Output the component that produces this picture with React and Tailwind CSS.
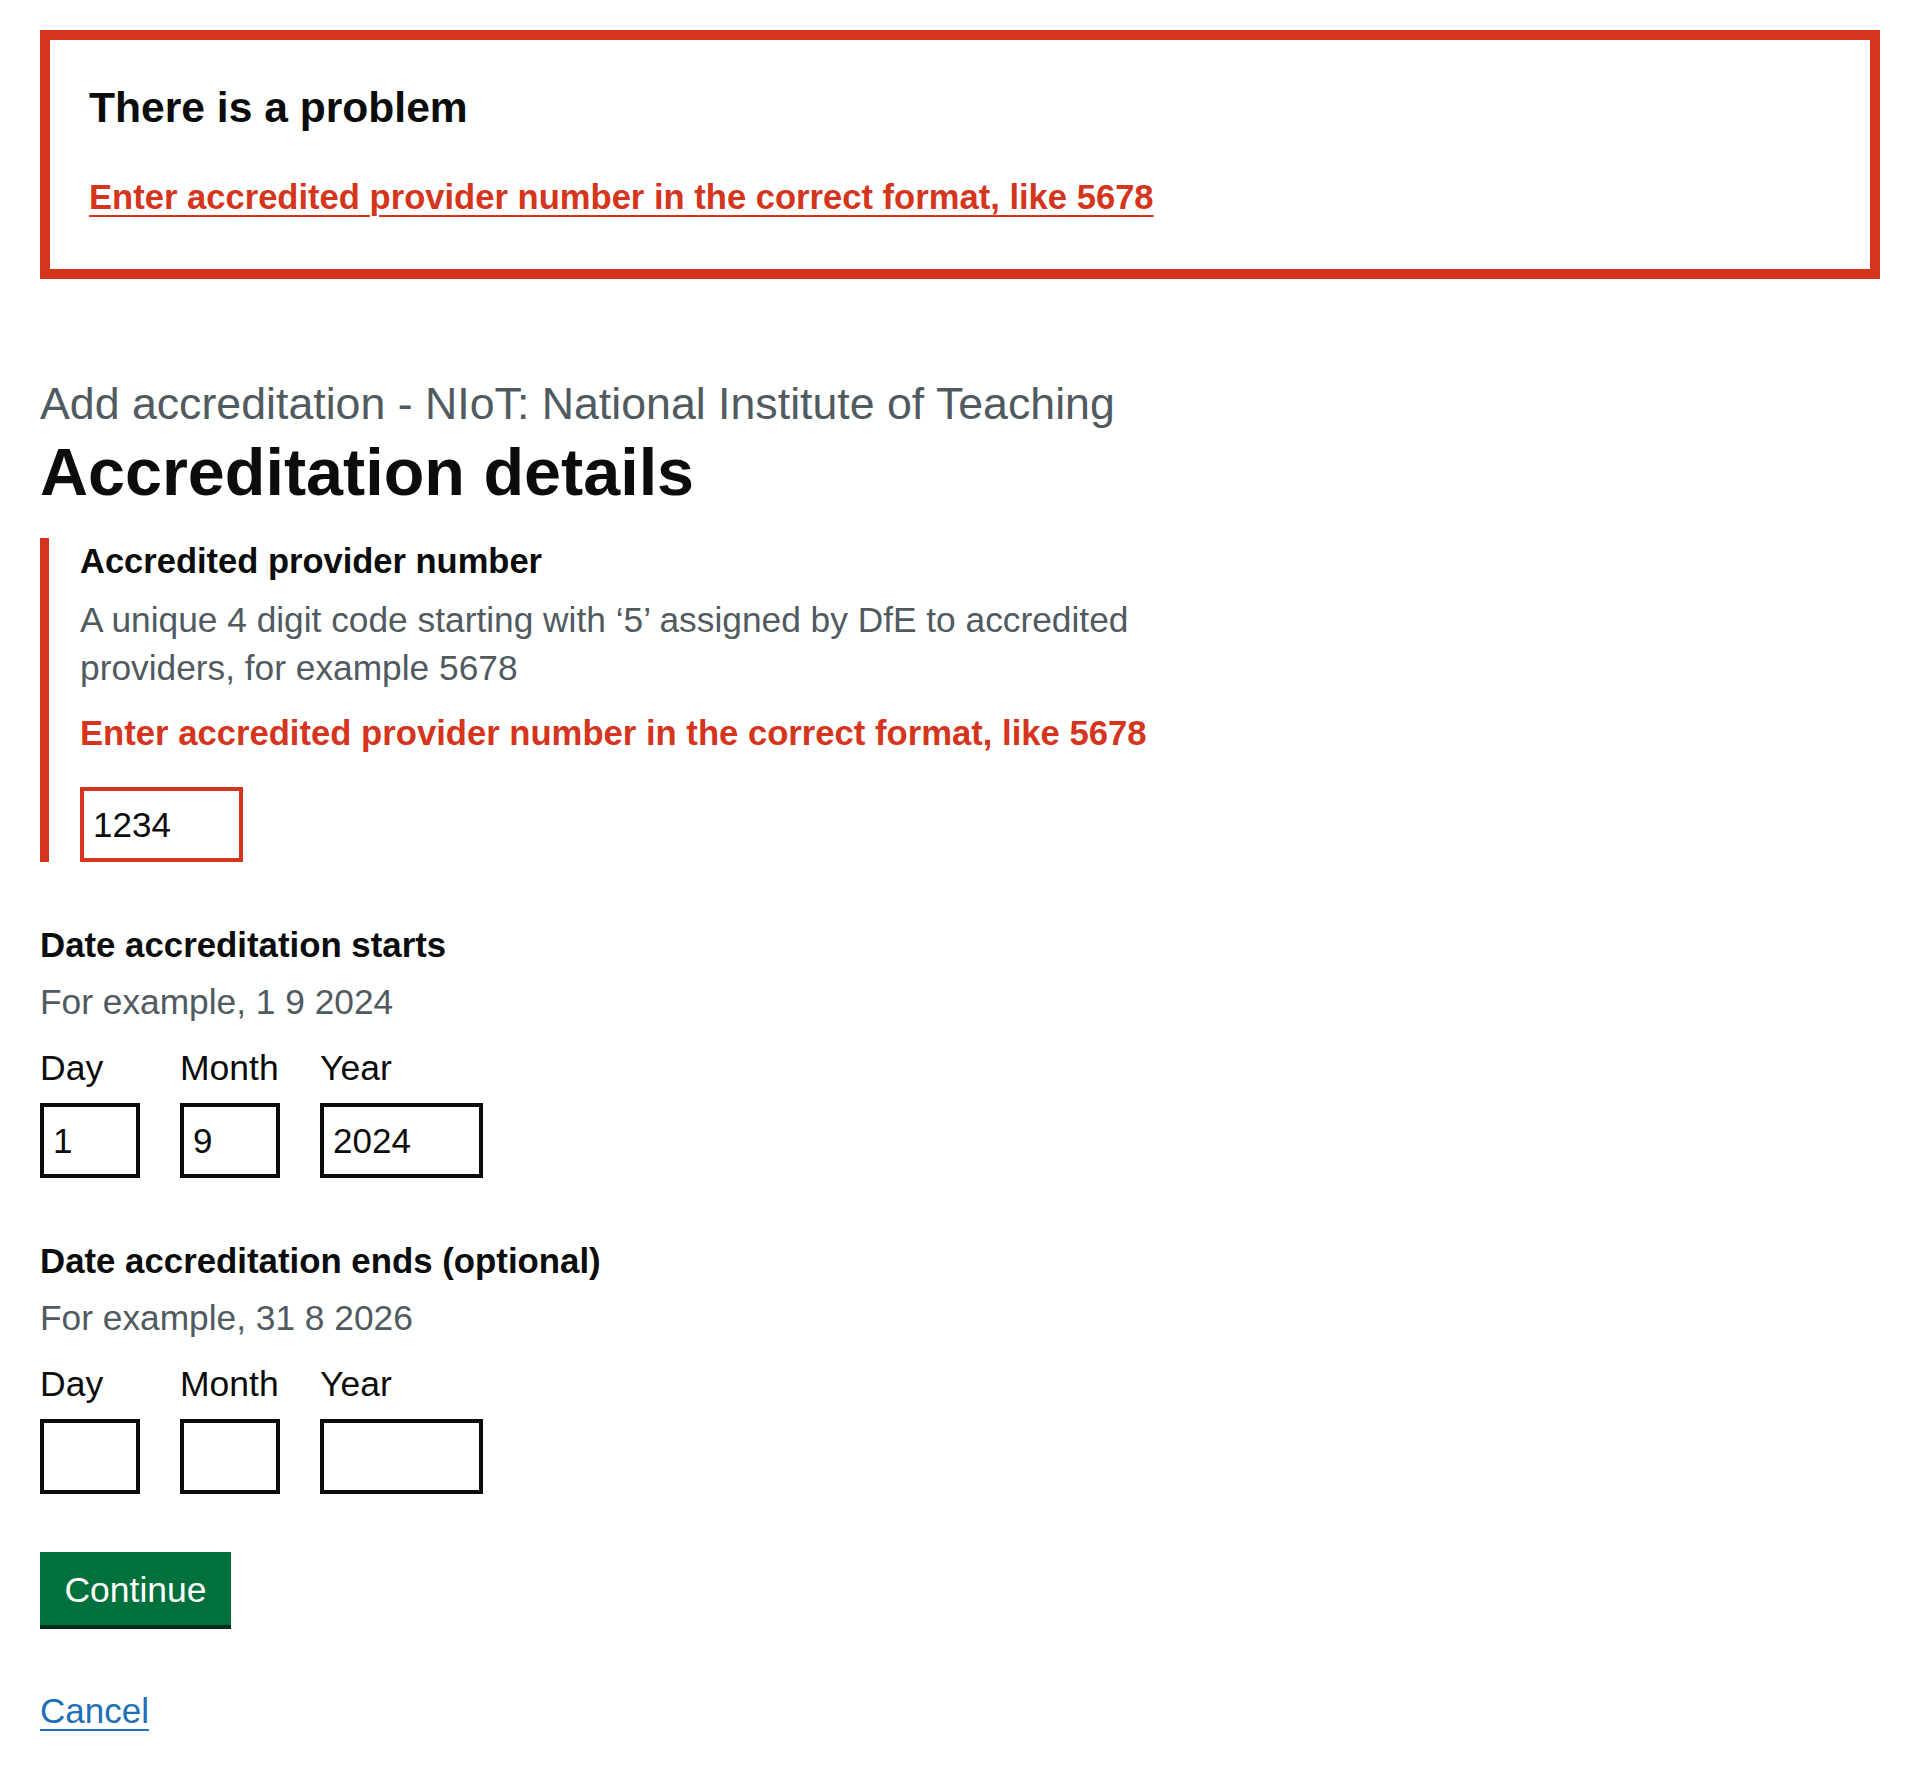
const inputBase =
  "block h-[75px] border-4 border-[#0b0c0c] bg-white px-[9px] text-[35px] text-[#0b0c0c] outline-none";

function DateField({ legend, hint, values = ["", "", ""], className = "" }) {
  const parts = [
    { label: "Day", width: "w-[100px]", value: values[0] },
    { label: "Month", width: "w-[100px]", value: values[1] },
    { label: "Year", width: "w-[163px]", value: values[2] },
  ];

  return (
    <div className={className}>
      <div className="text-[34.8px] leading-[46px] font-bold text-[#0b0c0c]">{legend}</div>
      <div className="mt-[10px] text-[35.3px] leading-[48px] text-[#505a5f]">{hint}</div>
      <div className="mt-[19px] flex gap-[40px]">
        {parts.map((p) => (
          <div key={p.label} className="flex flex-col">
            <label className="text-[35.5px] leading-[46px] text-[#0b0c0c]">{p.label}</label>
            <input readOnly value={p.value} className={`${inputBase} ${p.width} mt-[12px]`} />
          </div>
        ))}
      </div>
    </div>
  );
}

export default function App() {
  return (
    <div className="min-h-[1780px] bg-white px-[40px] pt-[30px] pb-[40px] font-['Liberation_Sans',Arial,sans-serif] text-[#0b0c0c]">
      {/* error summary */}
      <div className="border-[10px] border-[#d4351c] pt-[40px] pr-[40px] pb-[49px] pl-[39px]">
        <h2 className="text-[42.6px] leading-[54px] font-bold">There is a problem</h2>
        <ul className="mt-[40px]">
          <li className="text-[34.6px] leading-[46px] font-bold">
            <a
              href="#accredited-provider-number"
              className="text-[#d4351c] underline decoration-2 underline-offset-[6px]"
            >
              Enter accredited provider number in the correct format, like 5678
            </a>
          </li>
        </ul>
      </div>

      <div className="mt-[97px] w-[1208px]">
        <div className="mb-[4px] text-[44.7px] leading-[55px] text-[#505a5f]">
          Add accreditation - NIoT: National Institute of Teaching
        </div>
        <h1 className="text-[66.5px] leading-[74px] font-bold">Accreditation details</h1>

        {/* provider number, in error */}
        <div className="mt-[29px] border-l-[9px] border-[#d4351c] pl-[31px]">
          <label
            htmlFor="accredited-provider-number"
            className="block text-[34.5px] leading-[46px] font-bold"
          >
            Accredited provider number
          </label>
          <div className="mt-[12px] text-[35.3px] leading-[48px] text-[#505a5f]">
            A unique 4 digit code starting with ‘5’ assigned by DfE to accredited providers, for
            example 5678
          </div>
          <p className="mt-[18px] text-[34.65px] leading-[46px] font-bold text-[#d4351c]">
            Enter accredited provider number in the correct format, like 5678
          </p>
          <input
            id="accredited-provider-number"
            readOnly
            value="1234"
            className="mt-[31px] block h-[75px] w-[163px] border-4 border-[#d4351c] bg-white px-[9px] text-[35px] text-[#0b0c0c] outline-none"
          />
        </div>

        <DateField
          className="mt-[60px]"
          legend="Date accreditation starts"
          hint="For example, 1 9 2024"
          values={["1", "9", "2024"]}
        />
        <DateField
          className="mt-[60px]"
          legend="Date accreditation ends (optional)"
          hint="For example, 31 8 2026"
        />

        <button className="mt-[58px] block h-[73px] w-[191px] bg-[#00703c] pt-[4px] text-[35.5px] leading-none text-white shadow-[0_4px_0_#002d18]">
          Continue
        </button>

        <div className="mt-[63px] text-[35px] leading-[46px]">
          <a href="#" className="text-[#1d70b8] underline decoration-2 underline-offset-[6px]">
            Cancel
          </a>
        </div>
      </div>
    </div>
  );
}
